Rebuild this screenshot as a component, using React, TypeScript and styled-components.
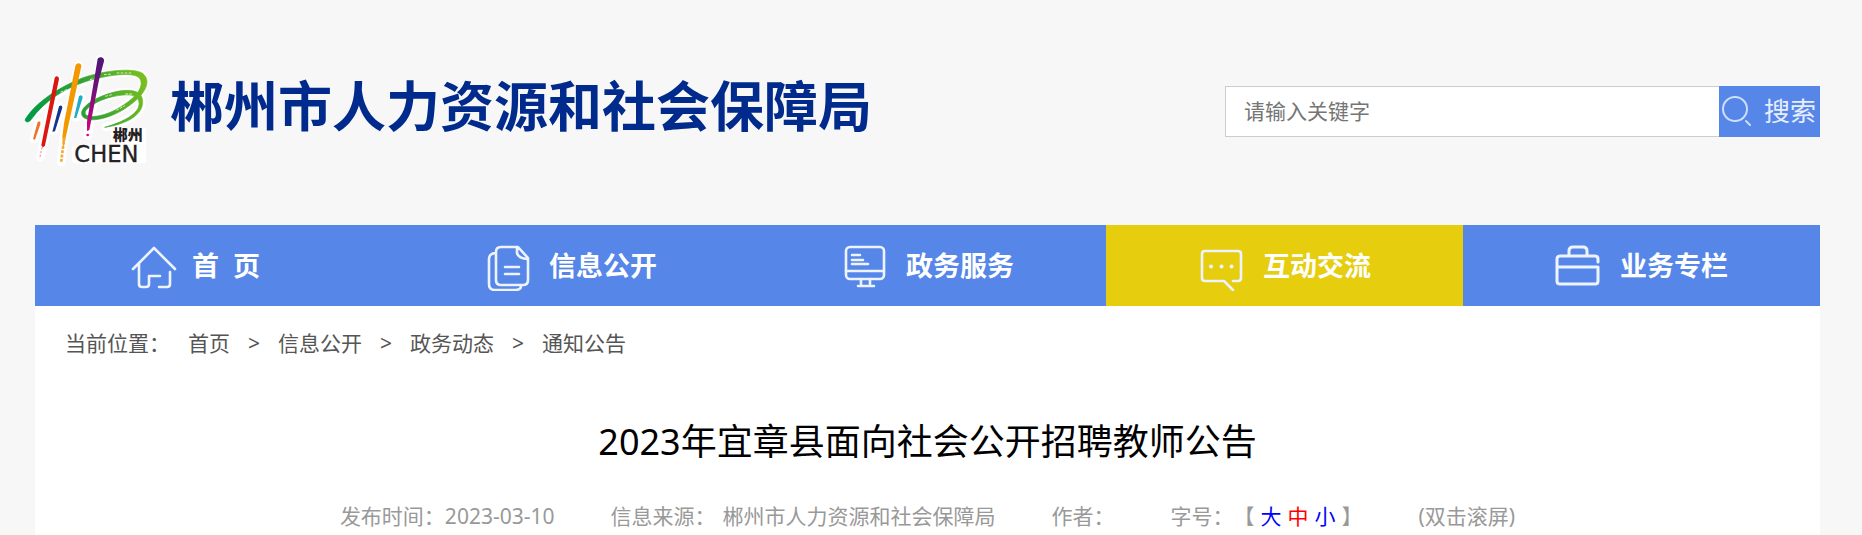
import React from "react";
import styled, { createGlobalStyle } from "styled-components";

const GlobalStyle = createGlobalStyle`
  * { box-sizing: border-box; }
  body {
    margin: 0;
    background: #f7f7f7;
    font-family: "Noto Sans", "Noto Sans CJK SC", sans-serif;
    font-size: 21px;
    line-height: 30px;
  }
  a { color: inherit; text-decoration: none; }
`;

const Page = styled.div`
  display: flex;
  flex-direction: column;
  min-height: 100vh;
`;

const Header = styled.header`
  display: flex;
  align-items: center;
  justify-content: space-between;
  padding: 54px 42px 57px 22px;
`;

const Brand = styled.a`
  display: flex;
  align-items: flex-start;
  gap: 20px;
`;

const SiteName = styled.h1`
  margin: 12px 0 0;
  font-size: 54px;
  line-height: 80px;
  font-weight: 700;
  color: #002a8c;
  white-space: nowrap;
`;

const SearchForm = styled.form`
  display: flex;
  width: 595px;
  height: 51px;
`;

const SearchInput = styled.input`
  flex: 1;
  min-width: 0;
  padding: 0 18px;
  border: 1px solid #ccc;
  border-right: 0;
  border-radius: 0;
  background: #fff;
  font: inherit;
  &::placeholder { color: #757575; opacity: 1; }
`;

const SearchButton = styled.button`
  display: flex;
  align-items: center;
  justify-content: space-between;
  width: 101px;
  padding: 0 4px 0 2px;
  border: 0;
  background: #5686e8;
  color: #e6eeff;
  font: inherit;
  font-size: 26px;
  white-space: nowrap;
`;

const Main = styled.main`
  flex: 1;
  margin: 0 42px 0 35px;
  background: #fff;
`;

const Nav = styled.nav`
  display: grid;
  grid-template-columns: repeat(5, 1fr);
`;

const NavLink = styled.a<{ $active?: boolean }>`
  display: flex;
  justify-content: center;
  height: 81px;
  background: ${(p) => (p.$active ? "#e6cd0e" : "#5686e8")};
  color: #fff;
`;

const NavContent = styled.span`
  display: flex;
  align-items: center;
  gap: 15px;
  width: 173px;
`;

const NavLabel = styled.span`
  font-size: 27px;
  line-height: 40px;
  font-weight: 700;
  white-space: pre;
`;

const NavIcon = styled.svg`
  flex: none;
  width: 50px;
  height: 50px;
  fill: none;
  stroke: #edf3ff;
  stroke-width: 2.6;
  stroke-linecap: round;
  stroke-linejoin: round;
`;

const Breadcrumb = styled.nav`
  display: flex;
  gap: 18px;
  padding: 22px 30px;
  color: #555;
`;

const Title = styled.h2`
  margin: 32px 0 0;
  font-size: 36px;
  line-height: 60px;
  font-weight: 400;
  text-align: center;
  color: #000;
`;

const Meta = styled.div`
  display: flex;
  justify-content: center;
  gap: 56px;
  padding: 29px 0 4px;
  color: #999;
  white-space: nowrap;
`;

const MetaItem = styled.span<{ $gap?: number }>`
  display: flex;
  gap: ${(p) => p.$gap ?? 0}px;
`;

const SizeButton = styled.button<{ $current?: boolean }>`
  padding: 0;
  border: 0;
  background: none;
  font: inherit;
  color: ${(p) => (p.$current ? "#f00" : "#00f")};
`;

const Logo = () => (
  <svg width="128" height="114" viewBox="36 42 384 342" role="img" aria-label="郴州">
    <defs>
      <linearGradient id="swoosh" gradientUnits="userSpaceOnUse" x1="50" y1="240" x2="400" y2="110">
        <stop offset="0" stopColor="#009944" />
        <stop offset="0.5" stopColor="#2fa036" />
        <stop offset="1" stopColor="#78be20" />
      </linearGradient>
      <linearGradient id="violet" x1="0" y1="0" x2="0" y2="1">
        <stop offset="0" stopColor="#4b1678" />
        <stop offset="0.5" stopColor="#79107a" />
        <stop offset="1" stopColor="#d6007f" />
      </linearGradient>
    </defs>
    <g fill="none" stroke="#fff" strokeWidth="26" strokeLinecap="round" strokeLinejoin="round">
      <path d="M55 239C100 180 190 125 280 106C330 95 385 92 402 112C415 140 375 180 330 208C290 232 240 240 222 226C206 204 262 172 320 160C360 152 392 158 393 185C397 220 350 248 288 261" />
      <path d="M141 116L99 318L91 352M205 76L166 260L153 366M271 58L233 286M86 248L72 297M152 202L131 272M212 170L197 232" />
      <path d="M312 272H400V362H194V324H312Z" fill="#fff" strokeWidth="16" />
    </g>
    <path
      d="M46 237C80 183 151 140 217 114C280 91 373 82 398 100C426 123 408 163 352 201C310 231 244 251 220 232C198 209 250 174 300 160C341 147 398 143 398 185C399 228 343 254 284 262C335 247 391 222 387 187C384 158 343 163 308 170C266 179 213 209 228 225C250 238 306 221 345 192C389 163 402 131 388 114C371 95 292 104 226 125C164 145 102 184 64 238C56 251 42 246 46 237Z"
      fill="url(#swoosh)"
      stroke="url(#swoosh)"
      strokeWidth="2"
    />
    <path d="M240 119L262 111M282 104L306 102M320 99L366 99M286 169L306 164M319 211L345 197M346 162L370 162M152 156L172 148" fill="none" stroke="#d7edbd" strokeWidth="3" strokeDasharray="8 4" />
    <path d="M134 114C137 105 147 108 147 117L105 316L98 323L94 315Z" fill="#dc1712" />
    <path d="M96 322L89 355" stroke="#f3aaa6" strokeWidth="4" strokeDasharray="7 4" />
    <path d="M196 78C199 65 215 68 214 79L174 262L160 323L157 290L162 250Z" fill="#f39800" />
    <path d="M163 292L153 369" stroke="#f5aa38" strokeWidth="8" strokeDasharray="9 4" />
    <path d="M262 62C261 47 285 49 282 64L267 120L238 270L231 273L231 245Z" fill="url(#violet)" />
    <circle cx="233" cy="285" r="4" fill="#d6007f" />
    <path d="M83 246L91 244L91 253L75 299L69 297Z" fill="#ec7623" />
    <path d="M147 199Q156 192 157 203L135 274L127 275Z" fill="#15358c" />
    <path d="M207 168Q218 161 218 173L199 234L192 234Z" fill="#20adc5" />
    <text x="308" y="300" fontFamily="Noto Sans CJK SC, sans-serif" fontSize="45" fontWeight="900" fill="#24211f">郴州</text>
    <text x="193" y="367" fontFamily="DejaVu Sans, sans-serif" fontSize="68" fill="#24211f" stroke="#24211f" strokeWidth="1">CHEN</text>
  </svg>
);

const icons: Record<string, React.ReactNode> = {
  home: (
    <path d="M6 28L27 7L48 28M12 23V43Q12 46 15 46H19Q22 46 22 43V35H33M43 31V43Q43 46 40 46H32" />
  ),
  docs: (
    <path d="M11 12Q5 13 5 18V43Q5 49 11 49H31Q37 49 37 45M17 6H34L44 17V39Q44 44 39 44H17Q12 44 12 39V11Q12 6 17 6ZM33 7V12Q34 17 43 18M21 26H35M21 33H35" />
  ),
  screen: (
    <>
      <rect x="5" y="6" width="38" height="32" rx="4" />
      <path d="M5 30H43M20 38V43M29 38V43M17 45H33M11 14H19M11 19H22M11 23H27" />
    </>
  ),
  chat: (
    <>
      <path d="M35 40H40Q43 40 43 37V13Q43 10 40 10H7Q4 10 4 13V37Q4 40 7 40H26L35 49" />
      <path d="M13 25.5H13.1M23.5 25.5H23.6M33.5 25.5H33.6" strokeWidth="4" />
    </>
  ),
  briefcase: (
    <path d="M43 21V18Q43 15 40 15H5Q2 15 2 18V40Q2 43 5 43H40Q43 43 43 40V26H3M14 15V10Q14 6 18 6H28Q32 6 32 10V15" strokeWidth="3" />
  ),
};

const navItems = [
  { icon: "home", label: "首  页" },
  { icon: "docs", label: "信息公开" },
  { icon: "screen", label: "政务服务" },
  { icon: "chat", label: "互动交流", active: true },
  { icon: "briefcase", label: "业务专栏" },
];

const crumbs = ["首页", "信息公开", "政务动态", "通知公告"];

export default function App() {
  return (
    <Page>
      <GlobalStyle />
      <Header>
        <Brand href="#">
          <Logo />
          <SiteName>郴州市人力资源和社会保障局</SiteName>
        </Brand>
        <SearchForm onSubmit={(e) => e.preventDefault()}>
          <SearchInput type="text" placeholder="请输入关键字" aria-label="请输入关键字" />
          <SearchButton type="submit">
            <svg width="32" height="32" viewBox="0 0 32 32" fill="none" stroke="#cfdefb" strokeWidth="2" aria-hidden="true">
              <circle cx="14" cy="14" r="12" />
              <path d="M25 26L29 30" strokeLinecap="round" />
            </svg>
            搜索
          </SearchButton>
        </SearchForm>
      </Header>
      <Main>
        <Nav>
          {navItems.map((item) => (
            <NavLink key={item.label} href="#" $active={item.active}>
              <NavContent>
                <NavIcon viewBox="0 0 50 50" aria-hidden="true">{icons[item.icon]}</NavIcon>
                <NavLabel>{item.label}</NavLabel>
              </NavContent>
            </NavLink>
          ))}
        </Nav>
        <Breadcrumb>
          <span>当前位置：</span>
          {crumbs.map((crumb, i) => (
            <React.Fragment key={crumb}>
              {i > 0 && <span>&gt;</span>}
              <a href="#">{crumb}</a>
            </React.Fragment>
          ))}
        </Breadcrumb>
        <Title>2023年宜章县面向社会公开招聘教师公告</Title>
        <Meta>
          <span>发布时间：2023-03-10</span>
          <MetaItem $gap={7}>
            <span>信息来源：</span>
            <span>郴州市人力资源和社会保障局</span>
          </MetaItem>
          <span>作者：</span>
          <MetaItem>
            <span>字号：</span>
            <MetaItem $gap={6}>
              <span>【</span>
              <SizeButton type="button">大</SizeButton>
              <SizeButton type="button" $current>中</SizeButton>
              <SizeButton type="button">小</SizeButton>
              <span>】</span>
            </MetaItem>
          </MetaItem>
          <span>(双击滚屏)</span>
        </Meta>
      </Main>
    </Page>
  );
}
